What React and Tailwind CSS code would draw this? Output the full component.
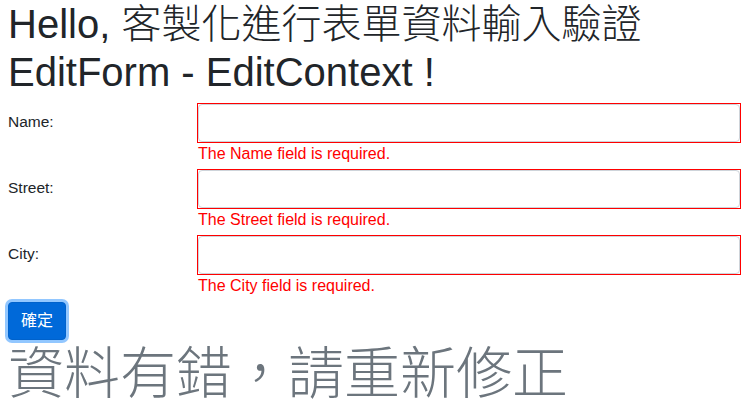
const FIELDS = [
  { id: 'name', label: 'Name:', error: 'The Name field is required.' },
  { id: 'street', label: 'Street:', error: 'The Street field is required.' },
  { id: 'city', label: 'City:', error: 'The City field is required.' }
];

const FONT = {
  fontFamily: "'Liberation Sans', 'Noto Sans CJK TC', sans-serif"
};

const App = () => {
  return (
    <div className="min-h-screen bg-white pl-2 pr-1.5 text-[#212529]" style={FONT}>
      <h1 className="mb-2 text-[40px] font-light leading-[48px]">
        <div className="h-[48px]">Hello, 客製化進行表單資料輸入驗證</div>
        <div className="h-[48px]">EditForm - EditContext !</div>
      </h1>

      <form onSubmit={(e) => e.preventDefault()}>
        {FIELDS.map((field) => (
          <div key={field.id} className="mb-1 flex">
            <label htmlFor={field.id} className="flex h-[36px] w-[190px] shrink-0 items-center text-[15.5px]">
              {field.label}
            </label>
            <div className="flex-1">
              <div className="-m-px border border-[#ff0000]">
                <input
                  id={field.id}
                  type="text"
                  className="block h-[38px] w-full rounded border border-[#ced4da] bg-white px-3 text-base outline-none"
                />
              </div>
              <div className="h-6 text-base leading-6 text-[#ff0000]">{field.error}</div>
            </div>
          </div>
        ))}

        <button
          type="submit"
          className="h-[38px] rounded border border-[#0062cc] bg-[#0069d9] px-3 text-base leading-6 text-white shadow-[0_0_0_3px_rgba(38,143,255,0.5)]"
        >
          確定
        </button>
      </form>

      <div className="text-[56px] font-light leading-[67px] text-[#6c757d]">資料有錯，請重新修正</div>
    </div>
  );
};

export default App;
